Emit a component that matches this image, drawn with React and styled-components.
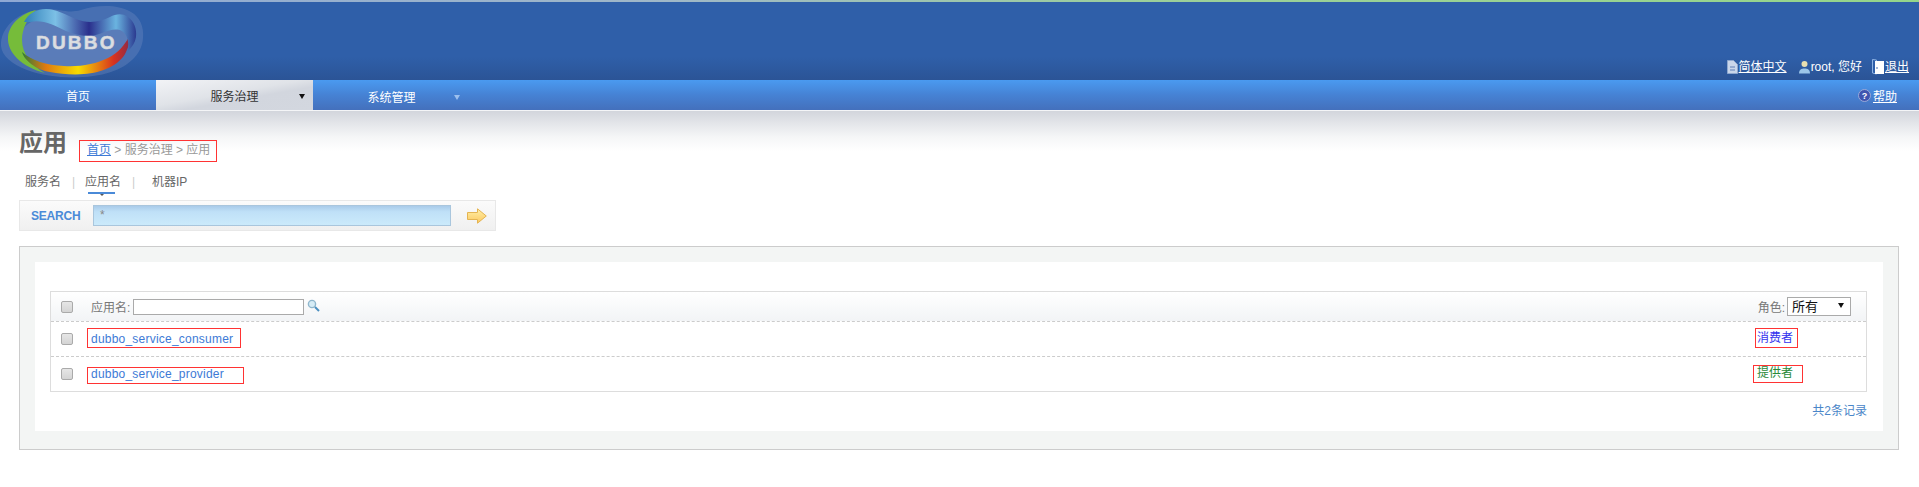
import React from "react";
import styled, { createGlobalStyle } from "styled-components";

const Global = createGlobalStyle`
  html, body { margin: 0; padding: 0; background: #fff; }
  body { font-family: "Liberation Sans", "Noto Sans CJK SC", sans-serif; font-size: 12px; color: #555; }
  * { box-sizing: border-box; }
`;

const Page = styled.div`
  width: 1919px;
  height: 487px;
  overflow: hidden;
  background: #fff;
`;
const Header = styled.header`
  height: 80px;
  border-top: 2px solid transparent;
  border-image: linear-gradient(90deg, #8ea8d4 0%, #a0b8c8 35%, #9ccf9a 60%, #95d58a 100%) 1;
  background: linear-gradient(180deg, #2f5fa9 0%, #2f5fa9 70%, #2b5496 100%);
  display: flex;
  justify-content: space-between;
  align-items: flex-end;
`;
const LogoWrap = styled.div`
  align-self: flex-start;
  width: 146px;
  height: 78px;
  position: relative;
`;
const LogoText = styled.span`
  position: absolute;
  left: 36px;
  top: 31px;
  font: bold 19px/20px "Liberation Sans", sans-serif;
  letter-spacing: 2.2px;
  color: #dcdfe3;
  -webkit-text-stroke: 0.6px #d4d6da;
`;
const UserBar = styled.div`
  display: flex;
  align-items: center;
  padding: 0 10px 5px 0;
  color: #fff;
  font-size: 12px;
  line-height: 16px;
`;
const UserItem = styled.span`
  display: inline-flex;
  align-items: center;
  gap: 1px;
  margin-left: ${p => p.$gap || 12}px;
`;
const WhiteLink = styled.a`
  color: #fff;
  text-decoration: underline;
`;
const Nav = styled.nav`
  height: 31px;
  background: linear-gradient(180deg, #4a9af0 0%, #4682d4 50%, #4470bc 100%);
  border-bottom: 1px solid #f4f5f7;
  display: flex;
  justify-content: space-between;
`;
const NavLeft = styled.div`
  display: flex;
`;
const NavItem = styled.div`
  width: ${p => p.$w || 157}px;
  height: 30px;
  position: relative;
  display: flex;
  align-items: center;
  justify-content: center;
  font-size: 12px;
  padding-top: ${p => p.$low ? 2 : 0}px;
  color: ${p => p.$active ? "#333" : "#fff"};
  background: ${p => p.$active
    ? "linear-gradient(170deg, #f2f3f6 0%, #e0e3e8 45%, #d2d6de 60%, #d3d7df 100%)"
    : "none"};
`;
const Caret = styled.span`
  position: absolute;
  right: ${p => p.$right}px;
  top: ${p => p.$top}px;
  width: 0;
  height: 0;
  border-left: 3px solid transparent;
  border-right: 3px solid transparent;
  border-top: 5px solid ${p => p.$color};
`;
const Help = styled.div`
  display: flex;
  align-items: center;
  gap: 2px;
  padding-right: 22px;
  color: #fff;
`;
const Shade = styled.div`
  height: 40px;
  background: linear-gradient(180deg, #d2d5dc 0%, #e3e5e9 30%, #f5f6f7 65%, #fff 100%);
  margin-bottom: -22px;
`;
const Content = styled.main`
  position: relative;
  padding: 0 20px 0 19px;
`;
const TitleRow = styled.div`
  display: flex;
  align-items: flex-start;
  height: 44px;
`;
const Title = styled.h1`
  margin: 1px 0 0;
  font-size: 24px;
  line-height: 26px;
  font-weight: bold;
  color: #666;
  width: 60px;
`;
const Crumbs = styled.div`
  margin-top: 11px;
  height: 22px;
  width: 138px;
  border: 1px solid #f33;
  padding-left: 7px;
  font-size: 12px;
  line-height: 18px;
  color: #999;
`;
const BlueLink = styled.a`
  color: #3d7ad6;
  text-decoration: ${p => p.$u ? "underline" : "none"};
`;
const Tabs = styled.div`
  display: flex;
  align-items: flex-start;
  height: 27px;
  padding-left: 6px;
  font-size: 12px;
  line-height: 18px;
`;
const Tab = styled.span`
  position: relative;
  width: ${p => p.$w}px;
  color: #666;
`;
const TabMark = styled.span`
  position: absolute;
  left: 3px;
  top: 19px;
  width: 27px;
  height: 2px;
  background: #4a8ad8;
  &::after {
    content: "";
    position: absolute;
    left: 12px;
    top: 2px;
    border-left: 2px solid transparent;
    border-right: 2px solid transparent;
    border-top: 2px solid #555;
  }
`;
const Sep = styled.span`
  width: ${p => p.$w}px;
  color: #ccc;
`;
const SearchBar = styled.form`
  display: flex;
  align-items: center;
  width: 477px;
  height: 31px;
  border: 1px solid #e8e8e8;
  background: linear-gradient(180deg, #fbfbfb 0%, #f0f0f0 100%);
  padding-left: 11px;
`;
const SearchLabel = styled.span`
  width: 62px;
  color: #4a8ad8;
  font-size: 12px;
  font-weight: bold;
  letter-spacing: -.2px;
`;
const SearchInput = styled.div`
  width: 358px;
  height: 21px;
  background: linear-gradient(180deg, #a9cbe9 0%, #bfe0f7 30%, #cbeafb 100%);
  border: 1px solid #a9c6dd;
  color: #888;
  padding: 2px 0 0 6px;
  line-height: 14px;
`;
const Panel = styled.section`
  margin-top: 15px;
  height: 204px;
  border: 1px solid #ccc;
  background: #f3f5f4;
  padding: 15px;
`;
const Inner = styled.div`
  height: 169px;
  background: #fff;
  padding: 29px 16px 0 15px;
`;
const Table = styled.div`
  border: 1px solid #ddd;
  height: 101px;
`;
const HeadRow = styled.div`
  height: 30px;
  display: flex;
  align-items: center;
  background: linear-gradient(180deg, #fff 0%, #f2f4f6 100%);
  border-bottom: 1px dashed #ccc;
  padding-right: 15px;
`;
const Row = styled.div`
  height: ${p => p.$last ? 33 : 35}px;
  display: flex;
  align-items: center;
  border-bottom: ${p => p.$last ? "none" : "1px dashed #ccc"};
`;
const Check = styled.span`
  width: 12px;
  height: 12px;
  margin: 0 18px 0 10px;
  flex: none;
  border: 1px solid #aaa;
  border-radius: 2px;
  background: linear-gradient(180deg, #e6e6e6, #d4d4d4);
`;
const HeadLabel = styled.span`
  color: #777;
  font-size: 12px;
`;
const FilterInput = styled.span`
  width: 171px;
  height: 16px;
  margin-left: 3px;
  border: 1px solid #aaa;
  background: #fff;
`;
const Spacer = styled.span`
  flex: 1;
`;
const SelectBox = styled.span`
  position: relative;
  width: 64px;
  height: 19px;
  margin-left: 2px;
  border: 1px solid #aaa;
  background: #fff;
  color: #111;
  font-size: 13px;
  line-height: 18px;
  padding-left: 4px;
`;
const SelectCaret = styled.span`
  position: absolute;
  right: 6px;
  top: 5px;
  width: 0;
  height: 0;
  border-left: 3px solid transparent;
  border-right: 3px solid transparent;
  border-top: 5px solid #111;
`;
const NameBox = styled.span`
  align-self: flex-start;
  margin: ${p => p.$mt}px 0 0 -4px;
  width: ${p => p.$w}px;
  height: ${p => p.$h}px;
  border: 1px solid #f33;
  padding-left: 3px;
  line-height: ${p => p.$lh}px;
  color: #3d7ad6;
  font-size: 12px;
  letter-spacing: .22px;
`;
const RoleBox = styled.span`
  align-self: flex-start;
  margin: ${p => p.$mt}px ${p => p.$mr}px 0 auto;
  width: ${p => p.$w}px;
  height: ${p => p.$h}px;
  border: 1px solid #f33;
  padding-left: ${p => p.$pl}px;
  line-height: ${p => p.$lh}px;
  color: ${p => p.$color};
  font-size: 12px;
`;
const Total = styled.div`
  margin-top: 11px;
  text-align: right;
  color: #4a86c8;
  font-size: 12px;
  line-height: 16px;
`;

const LogoSvg = () => (
  <svg width="146" height="78" viewBox="0 2 146 78" style={{ display: "block" }}>
    <defs>
      <linearGradient id="rb" x1="0" x2="1" y1="0" y2="0">
        <stop offset="0" stopColor="#2f7a3a" />
        <stop offset=".22" stopColor="#e07a10" />
        <stop offset=".52" stopColor="#f7dc00" />
        <stop offset=".85" stopColor="#d8321e" />
        <stop offset="1" stopColor="#8c2a48" />
      </linearGradient>
      <linearGradient id="tp" x1="0" x2="1" y1="0" y2="0">
        <stop offset="0" stopColor="#2f7fb8" />
        <stop offset=".28" stopColor="#7cc0e6" />
        <stop offset=".58" stopColor="#2a2f8c" />
        <stop offset=".82" stopColor="#6ab4e0" />
        <stop offset="1" stopColor="#2b3a90" />
      </linearGradient>
    </defs>
    <path d="M1 46C0 28 18 10 45 9c14-1 22 5 36 1 16-5 36-6 50 2 9 5 13 15 12 26-1 16-14 28-32 34-24 8-60 7-84-2C12 64 2 56 1 46z" fill="#7690c4" fillOpacity=".35" />
    <path d="M20 38c2-14 14-20 28-19 16 1 26 9 44 8 14-1 28-6 34 2 4 6 2 14-4 22-10 11-30 16-52 16-30 0-52-10-50-29z" fill="#5f80ba" fillOpacity=".8" />
    <path d="M36 10C22 13 9 24 8 37c-1 16 14 30 37 36C32 66 22 54 22 40c0-12 6-22 14-30z" fill="#76bc3a" />
    <path d="M22 52c2 8 14 18 28 20 10 2 24 3 34 2 18-1 36-9 42-22 3-6 4-12 4-17-5 10-12 18-22 23-12 6-28 9-44 8-18-1-32-5-42-14z" fill="url(#rb)" />
    <path d="M24 22C28 14 36 9 46 9c10 0 20 6 30 10 12 5 24 3 34-2 6-3 12-4 18 0 6 4 9 12 8 20-1 6-4 10-8 14 1-8 0-16-6-20-6-3-12-1-20 2-12 5-24 3-36-2-12-6-24-12-36-9-2 0-4 0-6 0z" fill="url(#tp)" />
  </svg>
);
const DocIcon = () => (
  <svg width="11" height="14" viewBox="0 0 11 14"><path d="M.5.5h6l4 4v9H.5z" fill="#c9d6ea" stroke="#8fa8cf" /><path d="M3 7h5M3 10h5" stroke="#5f7fb5" /></svg>
);
const UserIcon = () => (
  <svg width="11" height="14" viewBox="0 0 11 14"><circle cx="5.5" cy="4" r="3" fill="#e8dfb0" /><path d="M0 13.5c0-4 2.500-5 5.500-5s5.500 1 5.500 5z" fill="#9cc6e8" /></svg>
);
const DoorIcon = () => (
  <svg width="12" height="16" viewBox="0 0 12 16"><path d="M.5.5l4 .5v14l-4-1z" fill="#2f5fa9" stroke="#8fb4e4" /><path d="M3 2h9v13H3z" fill="#fff" /><circle cx="5" cy="9" r=".8" fill="#2f5fa9" /></svg>
);
const HelpIcon = () => (
  <svg width="13" height="13" viewBox="0 0 13 13"><circle cx="6.5" cy="6.500" r="6" fill="#3f55b0" stroke="#9aa9d8" /><text x="6.5" y="10" textAnchor="middle" fontSize="9" fontWeight="bold" fill="#fff" fontFamily="Liberation Sans">?</text></svg>
);
const ArrowIcon = () => (
  <svg width="20" height="16" viewBox="0 0 20 16" style={{ marginLeft: 16 }}>
    <defs>
      <linearGradient id="ar" x1="0" x2="0" y1="0" y2="1">
        <stop offset="0" stopColor="#fff0a8" />
        <stop offset="1" stopColor="#fbc860" />
      </linearGradient>
    </defs>
    <path d="M.5 4.500h10V.8L19.300 8l-8.800 7.200v-3.700H.5z" fill="url(#ar)" stroke="#e4b452" />
  </svg>
);
const SearchIcon = () => (
  <svg width="13" height="13" viewBox="0 0 13 13" style={{ marginLeft: 3, marginBottom: 3 }}><circle cx="5" cy="5" r="3.600" fill="#d6ecf6" stroke="#8fb6cc" strokeWidth="1.400" /><path d="M8 8l4 4" stroke="#4a8fc0" strokeWidth="2" /></svg>
);

export default function App() {
  return (
    <Page>
      <Global />
      <Header>
        <LogoWrap><LogoSvg /><LogoText>DUBBO</LogoText></LogoWrap>
        <UserBar>
          <UserItem><DocIcon /><WhiteLink>简体中文</WhiteLink></UserItem>
          <UserItem><UserIcon />root, 您好</UserItem>
          <UserItem $gap={10}><DoorIcon /><WhiteLink>退出</WhiteLink></UserItem>
        </UserBar>
      </Header>
      <Nav>
        <NavLeft>
          <NavItem $w={156}>首页</NavItem>
          <NavItem $active>服务治理<Caret $right={8} $top={14} $color="#111" /></NavItem>
          <NavItem $low>系统管理<Caret $right={10} $top={15} $color="#9cc0ee" /></NavItem>
        </NavLeft>
        <Help><HelpIcon /><WhiteLink>帮助</WhiteLink></Help>
      </Nav>
      <Shade />
      <Content>
        <TitleRow>
          <Title>应用</Title>
          <Crumbs><BlueLink $u>首页</BlueLink> &gt; 服务治理 &gt; 应用</Crumbs>
        </TitleRow>
        <Tabs>
          <Tab $w={47}>服务名</Tab>
          <Sep $w={13}>|</Sep>
          <Tab $w={47}>应用名<TabMark /></Tab>
          <Sep $w={20}>|</Sep>
          <Tab $w={50}>机器IP</Tab>
        </Tabs>
        <SearchBar>
          <SearchLabel>SEARCH</SearchLabel>
          <SearchInput>*</SearchInput>
          <ArrowIcon />
        </SearchBar>
        <Panel>
          <Inner>
            <Table>
              <HeadRow>
                <Check />
                <HeadLabel>应用名:</HeadLabel>
                <FilterInput />
                <SearchIcon />
                <Spacer />
                <HeadLabel>角色:</HeadLabel>
                <SelectBox>所有<SelectCaret /></SelectBox>
              </HeadRow>
              <Row>
                <Check />
                <NameBox $mt={6} $w={154} $h={20} $lh={20}>dubbo_service_consumer</NameBox>
                <RoleBox $mt={6} $h={20} $lh={18} $mr={68} $w={43} $pl={1} $color="#3333ee">消费者</RoleBox>
              </Row>
              <Row $last>
                <Check />
                <NameBox $mt={10} $w={157} $h={17} $lh={12}>dubbo_service_provider</NameBox>
                <RoleBox $mt={8} $h={18} $lh={14} $mr={63} $w={50} $pl={3} $color="#2a8a3a">提供者</RoleBox>
              </Row>
            </Table>
            <Total>共2条记录</Total>
          </Inner>
        </Panel>
      </Content>
    </Page>
  );
}
